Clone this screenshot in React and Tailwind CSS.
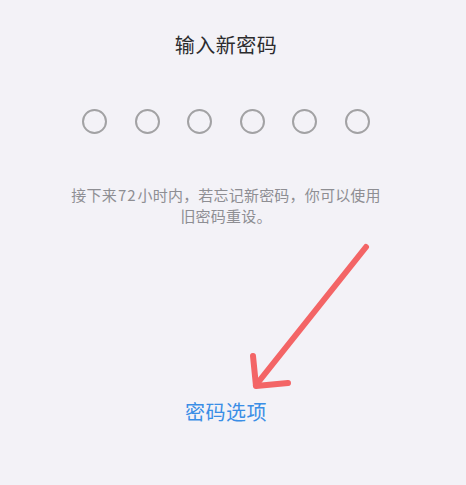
export default function App() {
  const dots = [0, 1, 2, 3, 4, 5];
  return (
    <div
      className="relative w-[466px] h-[485px] overflow-hidden bg-[#f3f2f7]"
      style={{ fontFamily: '"Noto Sans CJK SC", "Noto Sans", sans-serif' }}
    >
      <div className="flex flex-col items-center pr-[14px]">
        <h1 className="mt-[31px] text-[20px] leading-[28px] text-[#2c2c2e] tracking-[0.5px]">
          输入新密码
        </h1>

        <div className="mt-[50px] flex gap-[27.5px]">
          {dots.map((d) => (
            <div
              key={d}
              className="w-[25px] h-[25px] rounded-full border-2 border-[#a2a2a4]"
            />
          ))}
        </div>

        <p className="mt-[50px] text-center text-[15px] leading-[21px] text-[#8e8e93] tracking-[0.2px]">
          接下来<span className="px-[1px] tracking-[1px]">72</span>小时内，若忘记新密码，你可以使用
          <br />
          旧密码重设。
        </p>

        <button className="mt-[172px] text-[20px] leading-[28px] text-[#3a8ee6] tracking-[0.5px]">
          密码选项
        </button>
      </div>

      {/* red annotation arrow */}
      <svg
        className="absolute inset-0 pointer-events-none"
        width="466"
        height="485"
        viewBox="0 0 466 485"
      >
        <g
          stroke="#f36566"
          strokeWidth="6"
          strokeLinecap="round"
          strokeLinejoin="round"
          fill="none"
        >
          <path d="M366 247 L256 385" />
          <path d="M253 356 L256 386 L288 383" />
        </g>
      </svg>
    </div>
  );
}
